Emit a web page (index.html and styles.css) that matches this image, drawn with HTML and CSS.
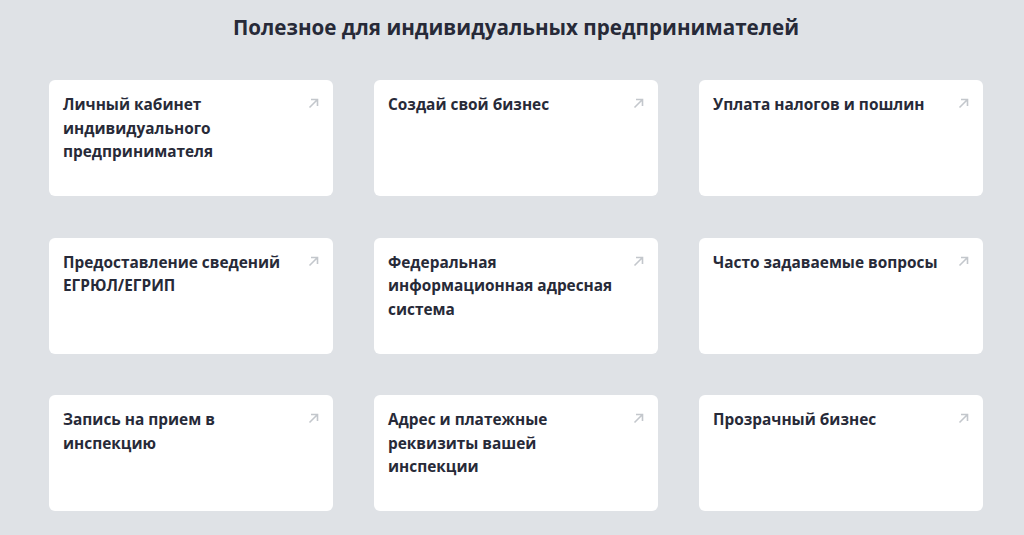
FILE: index.html
```html
<!DOCTYPE html>
<html lang="ru">
<head>
<meta charset="utf-8">
<title>Полезное для индивидуальных предпринимателей</title>
<link rel="stylesheet" href="styles.css">
</head>
<body>
<section class="useful">
  <h2 class="useful__title">Полезное для индивидуальных предпринимателей</h2>
  <div class="useful__grid">
    <a class="card" href="#"><span class="card__text">Личный кабинет индивидуального предпринимателя</span><svg class="card__icon" viewBox="0 0 11 11"><path d="M1.5 9.5L9.5 1.5M3 1.5H9.5V8"/></svg></a>
    <a class="card" href="#"><span class="card__text">Создай свой бизнес</span><svg class="card__icon" viewBox="0 0 11 11"><path d="M1.5 9.5L9.5 1.5M3 1.5H9.5V8"/></svg></a>
    <a class="card" href="#"><span class="card__text">Уплата налогов и пошлин</span><svg class="card__icon" viewBox="0 0 11 11"><path d="M1.5 9.5L9.5 1.5M3 1.5H9.5V8"/></svg></a>
    <a class="card" href="#"><span class="card__text">Предоставление сведений ЕГРЮЛ/ЕГРИП</span><svg class="card__icon" viewBox="0 0 11 11"><path d="M1.5 9.5L9.5 1.5M3 1.5H9.5V8"/></svg></a>
    <a class="card" href="#"><span class="card__text">Федеральная информационная адресная система</span><svg class="card__icon" viewBox="0 0 11 11"><path d="M1.5 9.5L9.5 1.5M3 1.5H9.5V8"/></svg></a>
    <a class="card" href="#"><span class="card__text">Часто задаваемые вопросы</span><svg class="card__icon" viewBox="0 0 11 11"><path d="M1.5 9.5L9.5 1.5M3 1.5H9.5V8"/></svg></a>
    <a class="card" href="#"><span class="card__text">Запись на прием в инспекцию</span><svg class="card__icon" viewBox="0 0 11 11"><path d="M1.5 9.5L9.5 1.5M3 1.5H9.5V8"/></svg></a>
    <a class="card" href="#"><span class="card__text">Адрес и платежные реквизиты вашей инспекции</span><svg class="card__icon" viewBox="0 0 11 11"><path d="M1.5 9.5L9.5 1.5M3 1.5H9.5V8"/></svg></a>
    <a class="card" href="#"><span class="card__text">Прозрачный бизнес</span><svg class="card__icon" viewBox="0 0 11 11"><path d="M1.5 9.5L9.5 1.5M3 1.5H9.5V8"/></svg></a>
  </div>
</section>
</body>
</html>
```
FILE: styles.css
```css
html, body {
  margin: 0;
  padding: 0;
  background: #dfe2e6;
}
body {
  font-family: "Open Sans", "Liberation Sans", sans-serif;
  color: #272a38;
}
.useful {
  width: 934px;
  padding: 12px 0 0 49px;
}
.useful__title {
  margin: 0 0 38px;
  font-size: 20.6px;
  line-height: 30px;
  font-weight: 700;
  text-align: center;
  color: #272a38;
}
.useful__grid {
  display: grid;
  grid-template-columns: repeat(3, 284px);
  grid-auto-rows: 116px;
  column-gap: 41px;
  row-gap: 41.5px;
}
.card {
  display: flex;
  justify-content: space-between;
  align-items: flex-start;
  background: #fff;
  border-radius: 6px;
  padding: 13px 14px 14px 14px;
  text-decoration: none;
  color: #272a38;
}
.card__text {
  max-width: 225px;
  font-size: 15.4px;
  line-height: 23.5px;
  font-weight: 700;
}
.card__icon {
  flex: none;
  width: 11px;
  height: 11px;
  margin-top: 5px;
  fill: none;
  stroke: #c3c7cc;
  stroke-width: 1.6;
}
```
